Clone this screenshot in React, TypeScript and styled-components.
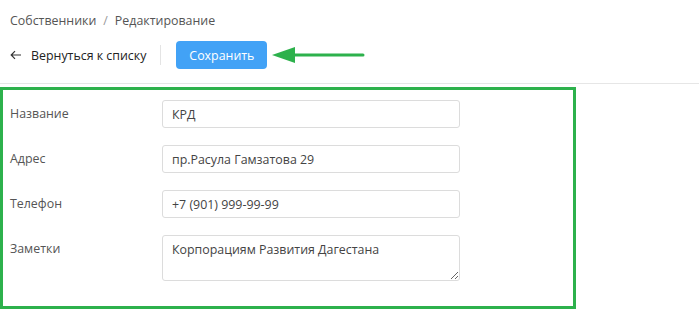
import React from 'react';
import styled, { createGlobalStyle } from 'styled-components';

const GlobalStyle = createGlobalStyle`
  body {
    margin: 0;
    background: #fff;
    font-family: 'Open Sans', 'Noto Sans', sans-serif;
    color: #333;
  }
`;

const Page = styled.div`
  width: 699px;
  height: 331px;
  overflow: hidden;
`;

const Header = styled.div`
  padding: 11px 10px 0;
  border-bottom: 1px solid #e6e6e6;
  height: 84px;
  box-sizing: border-box;
`;

const Breadcrumbs = styled.div`
  display: flex;
  align-items: center;
  gap: 7px;
  font-size: 12.4px;
  color: #555;
  height: 18px;
`;

const Slash = styled.span`
  color: #999;
`;

const Toolbar = styled.div`
  display: flex;
  align-items: center;
  margin-top: 12px;
  height: 28px;
`;

const BackLink = styled.a`
  display: flex;
  align-items: center;
  gap: 9px;
  font-size: 12.4px;
  color: #222;
  text-decoration: none;
  cursor: pointer;
  padding-right: 14px;
  border-right: 1px solid #e4e4e4;
  height: 20px;
`;

const SaveButton = styled.button`
  margin-left: 15px;
  height: 28px;
  width: 91px;
  border: none;
  border-radius: 4px;
  background: #42a2f6;
  color: #fff;
  font-family: inherit;
  font-size: 12.4px;
  cursor: pointer;
`;

const Pointer = styled.svg`
  margin-left: 4px;
`;

const Frame = styled.div`
  margin-top: 3px;
  width: 576px;
  height: 222px;
  box-sizing: border-box;
  border: 3px solid #2db14c;
  padding: 10px 0 0 7px;
`;

const Form = styled.div`
  display: grid;
  grid-template-columns: 152px 298px;
  row-gap: 17px;
  align-items: start;
`;

const Label = styled.label`
  font-size: 12.4px;
  color: #555;
  line-height: 28px;
`;

const TextInput = styled.input`
  box-sizing: border-box;
  width: 298px;
  height: 28px;
  border: 1px solid #dcdcdc;
  border-radius: 3px;
  padding: 0 9px;
  font-family: inherit;
  font-size: 12.4px;
  color: #444;
  outline: none;
`;

const TextArea = styled.textarea`
  box-sizing: border-box;
  width: 298px;
  height: 46px;
  border: 1px solid #dcdcdc;
  border-radius: 3px;
  padding: 5px 9px;
  font-family: inherit;
  font-size: 12.4px;
  color: #444;
  outline: none;
  resize: vertical;
`;

const fields = [
  { label: 'Название', value: 'КРД' },
  { label: 'Адрес', value: 'пр.Расула Гамзатова 29' },
  { label: 'Телефон', value: '+7 (901) 999-99-99' },
];

export default function App() {
  return (
    <Page>
      <GlobalStyle />
      <Header>
        <Breadcrumbs>
          <span>Собственники</span>
          <Slash>/</Slash>
          <span>Редактирование</span>
        </Breadcrumbs>
        <Toolbar>
          <BackLink>
            <svg width="12" height="10" viewBox="0 0 12 10">
              <path d="M11 5H1.5M5 1.2L1.2 5 5 8.8" fill="none" stroke="#333" strokeWidth="1.2" />
            </svg>
            Вернуться к списку
          </BackLink>
          <SaveButton>Сохранить</SaveButton>
          <Pointer width="94" height="18" viewBox="0 0 94 18">
            <path d="M22 9H92" stroke="#2db14c" strokeWidth="3" strokeLinecap="round" />
            <path d="M1 9L24 1V17Z" fill="#2db14c" />
          </Pointer>
        </Toolbar>
      </Header>
      <Frame>
        <Form>
          {fields.map((f) => (
            <React.Fragment key={f.label}>
              <Label>{f.label}</Label>
              <TextInput defaultValue={f.value} />
            </React.Fragment>
          ))}
          <Label>Заметки</Label>
          <TextArea defaultValue="Корпорациям Развития Дагестана" />
        </Form>
      </Frame>
    </Page>
  );
}
